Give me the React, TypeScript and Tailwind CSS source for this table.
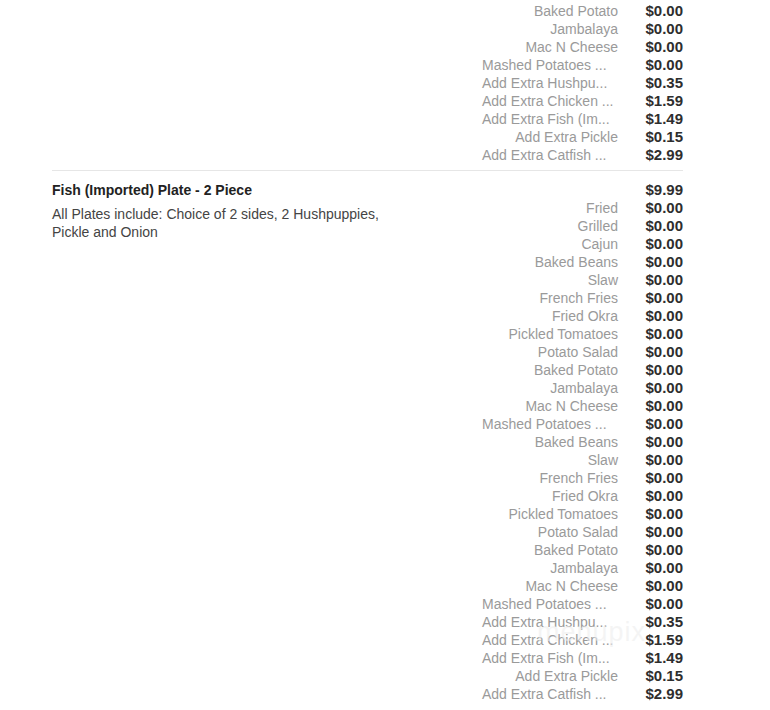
const sides = [
  'Fried',
  'Grilled',
  'Cajun',
  'Baked Beans',
  'Slaw',
  'French Fries',
  'Fried Okra',
  'Pickled Tomatoes',
  'Potato Salad',
  'Baked Potato',
  'Jambalaya',
  'Mac N Cheese',
  'Mashed Potatoes ...',
  'Baked Beans',
  'Slaw',
  'French Fries',
  'Fried Okra',
  'Pickled Tomatoes',
  'Potato Salad',
  'Baked Potato',
  'Jambalaya',
  'Mac N Cheese',
  'Mashed Potatoes ...',
];

const extras: [string, string][] = [
  ['Add Extra Hushpu...', '$0.35'],
  ['Add Extra Chicken ...', '$1.59'],
  ['Add Extra Fish (Im...', '$1.49'],
  ['Add Extra Pickle', '$0.15'],
  ['Add Extra Catfish ...', '$2.99'],
];

const tailOptions: [string, string][] = [
  ['Baked Potato', '$0.00'],
  ['Jambalaya', '$0.00'],
  ['Mac N Cheese', '$0.00'],
  ['Mashed Potatoes ...', '$0.00'],
  ...extras,
];

function OptionRow({name, price}: {name?: string; price: string}) {
  // shortened names sit flush left, as the site cuts them off
  const cut = name?.endsWith('...');
  return (
    <div className="flex h-[18px] items-center leading-[18px]">
      <div className={`w-[136px] whitespace-nowrap text-[14px] text-[#9a9a9a] ${cut ? 'text-left' : 'text-right'}`}>
        {name}
      </div>
      <div className="w-[65px] text-right text-[15px] font-bold text-[#2e2e2e]">{price}</div>
    </div>
  );
}

export default function App() {
  const fishOptions: [string, string][] = [...sides.map((s) => [s, '$0.00'] as [string, string]), ...extras];

  return (
    <div
      className="relative min-h-[710px] w-[770px] bg-white pl-[52px]"
      style={{fontFamily: '"Liberation Sans", Arial, sans-serif'}}
    >
      <div className="w-[631px]">
        {/* tail of previous item */}
        <div className="flex justify-end border-b border-[#e6e6e6] pb-[6px] pt-[2px]">
          <div>
            {tailOptions.map(([n, p], i) => (
              <OptionRow key={i} name={n} price={p} />
            ))}
          </div>
        </div>

        {/* fish plate */}
        <div className="flex justify-between border-b border-[#e6e6e6] pb-[7px] pt-[10px]">
          <div className="w-[340px] text-[14px] leading-[18px]">
            <div className="font-bold text-[#222]">Fish (Imported) Plate - 2 Piece</div>
            <div className="mt-[6px] text-[#444]">All Plates include: Choice of 2 sides, 2 Hushpuppies, Pickle and Onion</div>
          </div>
          <div>
            <OptionRow price="$9.99" />
            {fishOptions.map(([n, p], i) => (
              <OptionRow key={i} name={n} price={p} />
            ))}
          </div>
        </div>
      </div>

      {/* watermark */}
      <div className="pointer-events-none absolute left-[537px] top-[612px] text-[27px] font-light tracking-[1px] text-[#eeeeee]/60">
        menupix
      </div>
    </div>
  );
}
